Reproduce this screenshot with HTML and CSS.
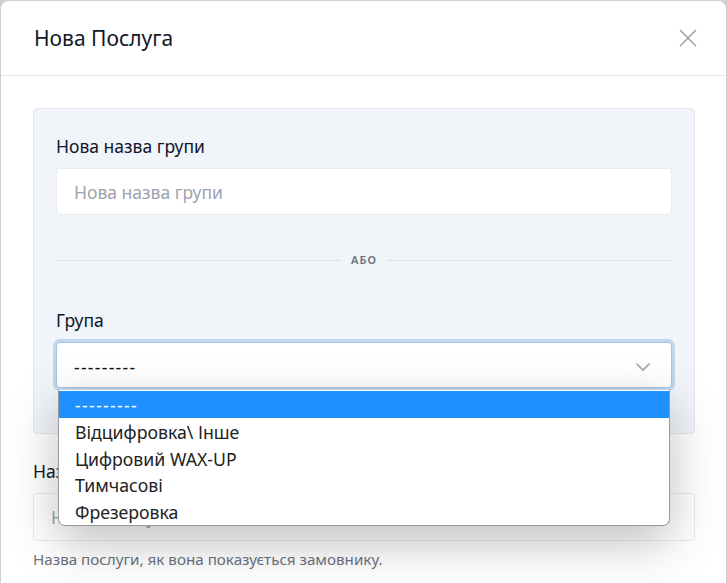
FILE: index.html
```html
<!DOCTYPE html>
<html lang="uk">
<head>
<meta charset="UTF-8">
<title>Нова Послуга</title>
<link rel="stylesheet" href="styles.css">
</head>
<body>
<div class="modal">
  <div class="modal-header">
    <h2 class="modal-title">Нова Послуга</h2>
    <svg class="close" width="18" height="18" viewBox="0 0 18 18">
      <path d="M1 1L17 17M17 1L1 17" stroke="#9ca3af" stroke-width="1.6" fill="none"/>
    </svg>
  </div>
  <div class="modal-body">
    <div class="group-box">
      <label class="field-label">Нова назва групи</label>
      <input class="field-input" type="text" placeholder="Нова назва групи">
      <div class="divider"><span>АБО</span></div>
      <label class="field-label">Група</label>
      <div class="select-wrap">
        <div class="select">
          <span class="dashes">---------</span>
          <svg width="16" height="10" viewBox="0 0 16 10">
            <path d="M1.5 1.5L8 8L14.5 1.5" stroke="#9ca3af" stroke-width="1.6" fill="none"/>
          </svg>
        </div>
        <ul class="options">
          <li class="active dashes">---------</li>
          <li>Відцифровка\ Інше</li>
          <li>Цифровий WAX-UP</li>
          <li>Тимчасові</li>
          <li>Фрезеровка</li>
        </ul>
      </div>
    </div>
    <label class="field-label name-label">Назва послуги</label>
    <input class="field-input wide" type="text" placeholder="Назва послуги">
    <p class="help">Назва послуги, як вона показується замовнику.</p>
  </div>
</div>
</body>
</html>
```

FILE: styles.css
```css
body {
  margin: 0;
  background-color: #cfd0d2;
  font-family: 'Noto Sans', 'Open Sans', sans-serif;
  color: #1f2937;
  height: 583px;
  overflow: hidden;
}
.modal {
  margin: 1px 1px 0 1px;
  background-color: #fff;
  border-radius: 8px 8px 0 0;
  height: 600px;
}
.modal-header {
  display: flex;
  align-items: center;
  justify-content: space-between;
  height: 74px;
  padding: 0 29px 0 33px;
  border-bottom: 1px solid #e5e7eb;
}
.modal-title {
  margin: 0;
  font-size: 21px;
  font-weight: 400;
  color: #111827;
}
.modal-body {
  padding: 32px 31px 0 32px;
}
.group-box {
  background-color: #f1f4f9;
  border: 1px solid #e3e8ef;
  border-radius: 4px;
  padding: 25px 22px 45px 22px;
}
.field-label {
  display: block;
  font-size: 17.5px;
  font-weight: 400;
  line-height: 24px;
  margin-bottom: 10px;
  color: #0f172a;
}
.field-input {
  display: block;
  box-sizing: border-box;
  width: 100%;
  height: 47px;
  padding: 0 17px;
  border: 1px solid #e8ebf0;
  border-radius: 4px;
  background-color: #fff;
  font-family: inherit;
  font-size: 17.5px;
  outline: none;
}
.field-input::placeholder {
  color: #9ca3af;
}
.divider {
  display: flex;
  align-items: center;
  gap: 10px;
  margin: 37px 0 40px;
  font-size: 11px;
  font-weight: 600;
  letter-spacing: 1px;
  color: #6b7280;
  line-height: 16px;
}
.divider::before,
.divider::after {
  content: '';
  flex: 1;
  height: 1px;
  background-color: #dde2ea;
}
.select-wrap {
  position: relative;
}
.select {
  display: flex;
  align-items: center;
  justify-content: space-between;
  box-sizing: border-box;
  height: 46px;
  padding: 4px 20px 0 17px;
  background-color: #fff;
  border: 1px solid #a9c3e3;
  border-radius: 4px;
  box-shadow: 0 0 0 3px #c3d6ee;
  font-size: 17.5px;
  color: #111;
}
.dashes {
  letter-spacing: 1.3px;
}
.options {
  position: absolute;
  left: 2px;
  right: 2px;
  top: 48px;
  margin: 0;
  padding: 1px 0 0;
  list-style: none;
  background-color: #fff;
  border: 1px solid #9a9a9a;
  border-top: none;
  border-radius: 0 0 7px 7px;
  box-shadow: 0 16px 50px rgba(0, 0, 0, 0.26);
  overflow: hidden;
  z-index: 2;
}
.options li {
  height: 26.8px;
  line-height: 28px;
  padding-left: 16px;
  font-size: 17.7px;
  color: #222;
}
.options li.active {
  background-color: #1e90ff;
  color: #fff;
}
.name-label {
  margin-top: 25px;
}
.wide {
  height: 48px;
}
.help {
  margin: 8px 0 0;
  font-size: 15.2px;
  color: #6b7280;
}
```
